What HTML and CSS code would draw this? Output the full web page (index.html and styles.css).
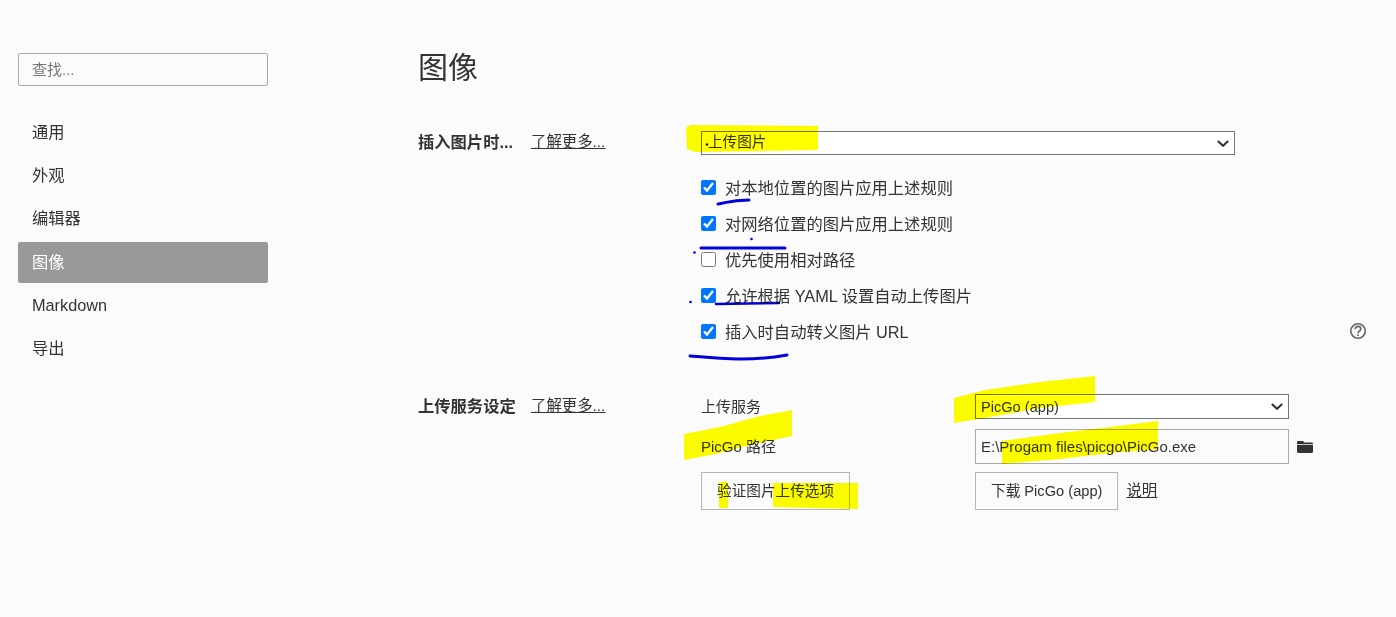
FILE: index.html
```html
<!DOCTYPE html>
<html lang="zh-CN">
<head>
<meta charset="utf-8">
<title>图像</title>
<link rel="stylesheet" href="styles.css">
</head>
<body>
<div class="app">
  <aside class="sidebar">
    <input class="search" type="text" placeholder="查找...">
    <nav class="nav">
      <a class="nav-item">通用</a>
      <a class="nav-item">外观</a>
      <a class="nav-item">编辑器</a>
      <a class="nav-item active">图像</a>
      <a class="nav-item">Markdown</a>
      <a class="nav-item">导出</a>
    </nav>
  </aside>
  <main class="main">
    <h1 class="title">图像</h1>
    <section class="section first">
      <div class="head"><strong>插入图片时...</strong><a class="link">了解更多...</a></div>
      <div class="body">
        <select class="select wide"><option>上传图片</option></select>
        <div class="checks">
          <label class="check"><input type="checkbox" checked><span>对本地位置的图片应用上述规则</span></label>
          <label class="check"><input type="checkbox" checked><span>对网络位置的图片应用上述规则</span></label>
          <label class="check"><input type="checkbox"><span>优先使用相对路径</span></label>
          <label class="check"><input type="checkbox" checked><span>允许根据 YAML 设置自动上传图片</span></label>
          <label class="check"><input type="checkbox" checked><span>插入时自动转义图片 URL</span>
            <svg class="help" viewBox="0 0 16 16" aria-hidden="true"><circle cx="8" cy="8" r="7.200" fill="none" stroke="#666" stroke-width="1.600"/><path d="M5.200 6.200C5.200 4.500 6.400 3.400 8 3.400s2.800 1 2.800 2.500C10.800 8 8 8 8 10.200" fill="none" stroke="#666" stroke-width="1.600"/><circle cx="8" cy="12.300" r="1" fill="#666"/></svg>
          </label>
        </div>
      </div>
    </section>
    <section class="section second">
      <div class="head"><strong>上传服务设定</strong><a class="link">了解更多...</a></div>
      <div class="form">
        <span class="cell-label">上传服务</span>
        <select class="select field"><option>PicGo (app)</option></select>
        <span></span>
        <span class="cell-label">PicGo 路径</span>
        <input class="path" type="text" value="E:\Progam files\picgo\PicGo.exe">
        <svg class="folder" viewBox="0 0 16 12" aria-hidden="true"><path d="M1.200 0H6l1.500 1.500h7.300c.7 0 1.200.5 1.200 1.200V3H0V1.200C0 .5.500 0 1.200 0z" fill="#333"/><path d="M0 3.700h16v7.100c0 .7-.5 1.200-1.200 1.200H1.200C.5 12 0 11.500 0 10.800z" fill="#333"/></svg>
        <div class="cell-btn"><button class="btn" type="button">验证图片上传选项</button></div>
        <div class="cell-btn"><button class="btn" type="button">下载 PicGo (app)</button><a class="link">说明</a></div>
      </div>
    </section>
  </main>
  <svg class="ink" viewBox="0 0 1396 617" aria-hidden="true">
    <g class="marker">
      <path d="M686 128 L690 125 L818 126 L818 150 L695 152 L687 149Z"/>
      <path d="M684 434 L720 427 L760 416 L792 410 L792 436 L750 445 L715 454 L684 460Z"/>
      <path d="M719 482 L728 482 L728 508 L719 508Z"/>
      <path d="M773 483 L858 483 L858 509 L773 507Z"/>
      <path d="M954 398 L985 390 L1040 382 L1095 376 L1095 402 L1040 408 L990 417 L954 423Z"/>
      <path d="M1002 441 L1060 433 L1110 427 L1158 421 L1158 449 L1110 453 L1060 459 L1002 464Z"/>
    </g>
    <g class="pen">
      <path d="M718 204 C726 203 730 200 749 200"/>
      <path d="M701 248 L785 248"/>
      <path d="M716 304 L779 303" class="thin"/>
      <path d="M690 356 C715 358 750 362 787 355"/>
      <circle cx="751.500" cy="239" r="1.300"/>
      <circle cx="694.500" cy="252.500" r="1.300"/>
      <circle cx="690.500" cy="302" r="1.300"/>
    </g>
    <circle class="speck" cx="707" cy="144.500" r="1.300"/>
  </svg>
</div>
</body>
</html>
```
FILE: styles.css
```css
* { box-sizing: border-box; }
html, body { margin: 0; height: 100%; }
body {
  background: #fbfbfb;
  color: #333;
  font-family: "Liberation Sans", "Noto Sans CJK SC", sans-serif;
  font-size: 16.300px;
  line-height: 20px;
  overflow: hidden;
}
.app { position: relative; display: flex; height: 617px; }

.sidebar { width: 250px; margin: 53px 150px 0 18px; flex: none; }
.search {
  display: block;
  width: 100%;
  height: 33px;
  padding: 0 13px;
  border: 1px solid #aaa;
  border-radius: 2px;
  background: #fbfbfb;
  font: 15px/20px "Liberation Sans", "Noto Sans CJK SC", sans-serif;
  outline: none;
}
.search::placeholder { color: #777; }
.nav { display: flex; flex-direction: column; gap: 2.400px; margin-top: 26px; }
.nav-item {
  display: flex;
  align-items: center;
  height: 41px;
  padding: 0 14px 2px;
  border-radius: 2px;
}
.nav-item.active { background: #999; color: #fff; }

.main { flex: 1; padding: 48px 30px 0 0; }
.title { margin: 0; height: 40px; font-size: 30px; font-weight: 400; line-height: 40px; }
.section { display: grid; grid-template-columns: 283px 1fr; }
.first { margin-top: 43px; }
.second { margin-top: 44px; }
.head { display: flex; align-items: center; height: 24px; padding-bottom: 3px; }
.head strong { width: 113px; flex: none; }
.second .head { height: 25px; padding-bottom: 2px; }
.link { font-size: 15.400px; color: #333; text-decoration: underline; }

.select {
  display: block;
  appearance: none;
  border: 1px solid #767676;
  border-radius: 0;
  background: #fff url("data:image/svg+xml,%3Csvg xmlns='http://www.w3.org/2000/svg' width='12' height='7' viewBox='0 0 12 7'%3E%3Cpath d='M.8 1 6 5.800 11.200 1' fill='none' stroke='%23333' stroke-width='2.100'/%3E%3C/svg%3E") no-repeat right 5px center;
  color: #333;
  font: 14.600px/20px "Liberation Sans", "Noto Sans CJK SC", sans-serif;
  padding: 0 24px 0 5px;
}
.wide { width: 534px; height: 24px; padding: 0 24px 3px 6px; }
.checks { margin-top: 15px; }
.check { display: flex; align-items: center; height: 36px; }
.check input { width: 15px; height: 15px; margin: 0 9px 2px 0; accent-color: #0075ff; }
.help { width: 16px; height: 16px; margin-left: auto; margin-bottom: 2px; }

.form { display: grid; grid-template-columns: 274px 314px auto; grid-template-rows: 25px 35px 38px; row-gap: 10px; align-items: center; font-size: 15px; }
.field { width: 314px; height: 25px; }
.path {
  width: 314px;
  height: 35px;
  padding: 0 5px;
  border: 1px solid #aaa;
  background: #fbfbfb;
  color: #333;
  font: 15px/20px "Liberation Sans", "Noto Sans CJK SC", sans-serif;
  outline: none;
}
.folder { width: 16px; height: 12px; margin-left: 8px; }
.cell-btn { display: flex; align-items: center; gap: 8px; align-self: start; margin-top: -2px; }
.btn {
  height: 38px;
  padding: 0 15px;
  border: 1px solid #b5b5b5;
  border-radius: 0;
  background: transparent;
  color: #333;
  font: 14.650px/20px "Liberation Sans", "Noto Sans CJK SC", sans-serif;
}
.ink { position: absolute; inset: 0; width: 1396px; height: 617px; pointer-events: none; mix-blend-mode: multiply; }
.marker path { fill: #ffff00; }
.pen path { fill: none; stroke: #0000e0; stroke-width: 3; stroke-linecap: round; }
.pen path.thin { stroke-width: 2.500; }
.pen circle { fill: #0000e0; }
.speck { fill: #222; }
```
